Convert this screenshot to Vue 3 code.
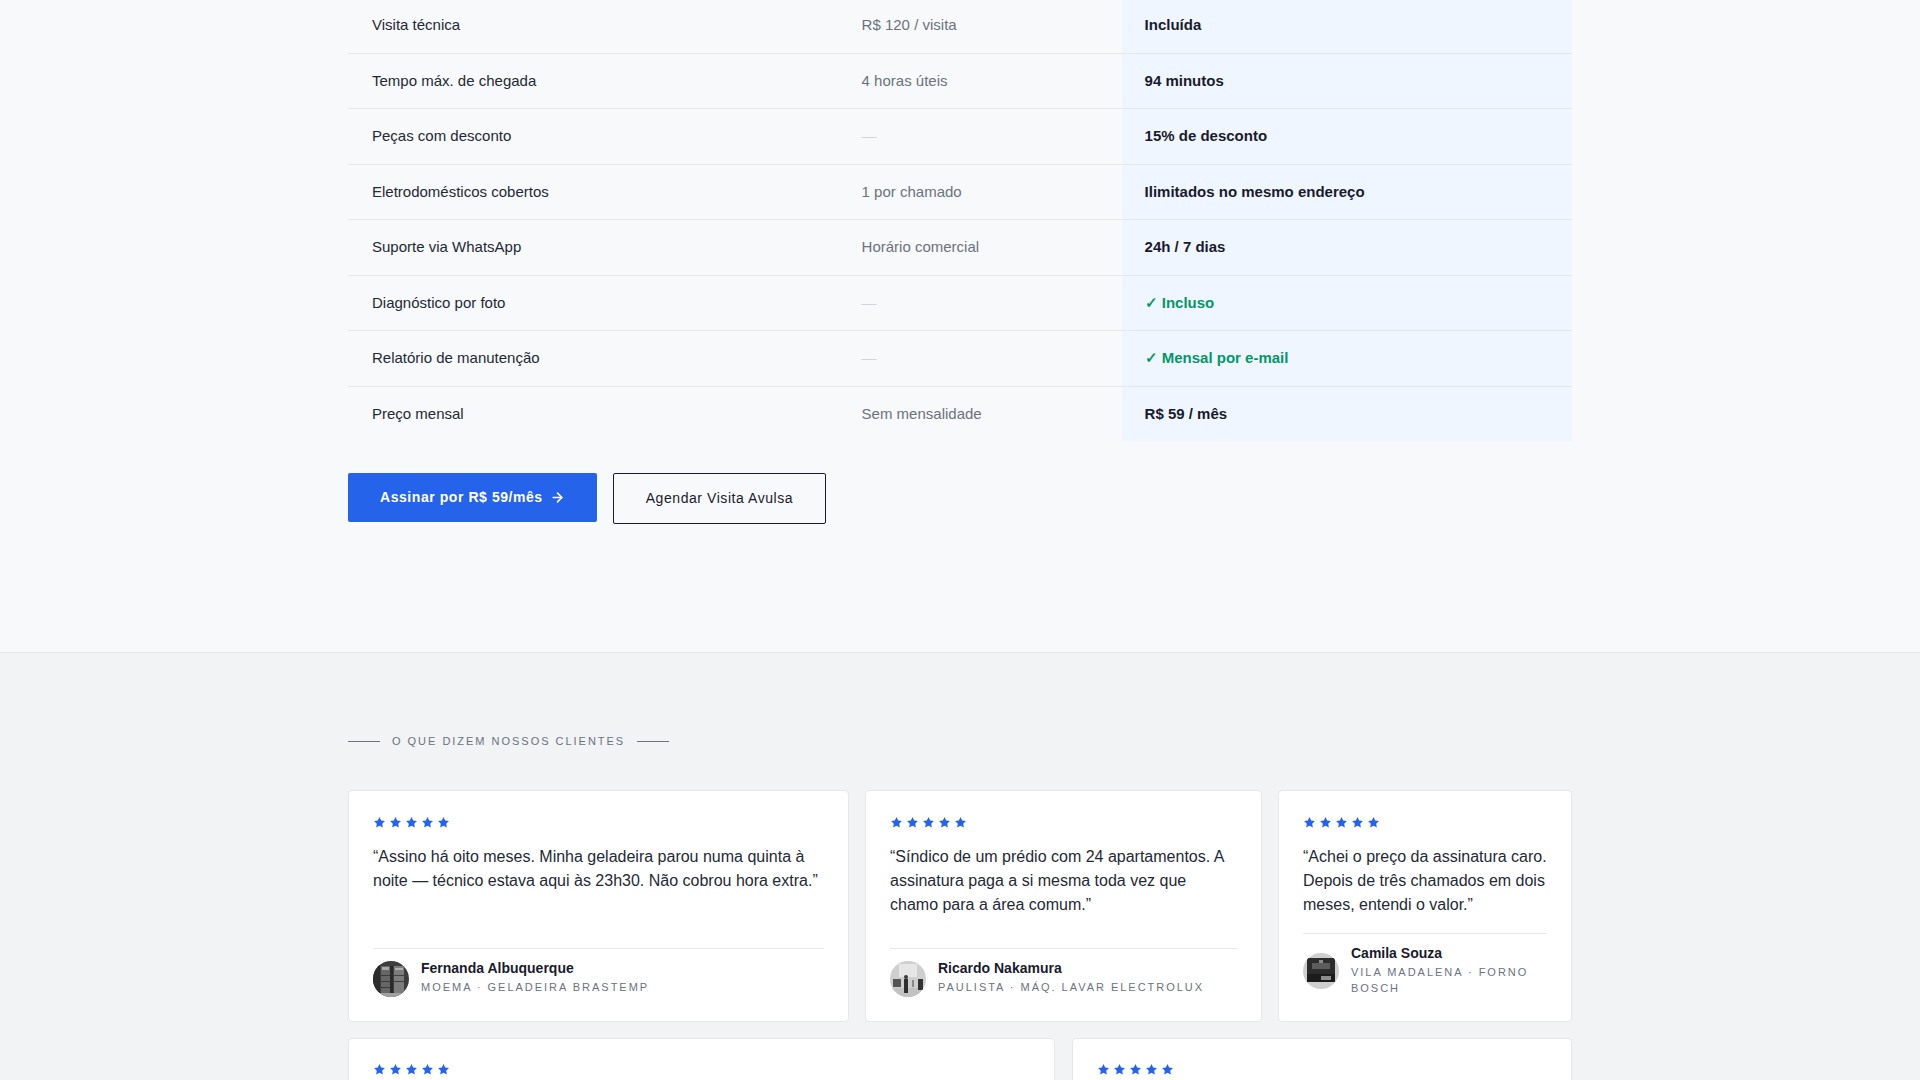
<script setup>
const rows = [
  { label: 'Visita técnica', avulso: 'R$ 120 / visita', plan: 'Incluída' },
  { label: 'Tempo máx. de chegada', avulso: '4 horas úteis', plan: '94 minutos' },
  { label: 'Peças com desconto', avulso: '—', none: true, plan: '15% de desconto' },
  { label: 'Eletrodomésticos cobertos', avulso: '1 por chamado', plan: 'Ilimitados no mesmo endereço' },
  { label: 'Suporte via WhatsApp', avulso: 'Horário comercial', plan: '24h / 7 dias' },
  { label: 'Diagnóstico por foto', avulso: '—', none: true, plan: '✓ Incluso', ok: true },
  { label: 'Relatório de manutenção', avulso: '—', none: true, plan: '✓ Mensal por e-mail', ok: true },
  { label: 'Preço mensal', avulso: 'Sem mensalidade', plan: 'R$ 59 / mês' }
]
const stars = [1, 2, 3, 4, 5]
const cardsTop = [
  { quote: '“Assino há oito meses. Minha geladeira parou numa quinta à noite — técnico estava aqui às 23h30. Não cobrou hora extra.”', name: 'Fernanda Albuquerque', meta: 'Moema · Geladeira Brastemp', kind: 'fridge' },
  { quote: '“Síndico de um prédio com 24 apartamentos. A assinatura paga a si mesma toda vez que chamo para a área comum.”', name: 'Ricardo Nakamura', meta: 'Paulista · Máq. Lavar Electrolux', kind: 'people' },
  { quote: '“Achei o preço da assinatura caro. Depois de três chamados em dois meses, entendi o valor.”', name: 'Camila Souza', meta: 'Vila Madalena · Forno Bosch', kind: 'oven' }
]
</script>

<template>
  <div class="page">
    <section class="compare">
      <div class="wrap">
        <table class="table">
          <colgroup>
            <col class="c1" /><col class="c2" /><col class="c3" />
          </colgroup>
          <tbody>
            <tr v-for="r in rows" :key="r.label">
              <td class="label">{{ r.label }}</td>
              <td class="avulso" :class="{ none: r.none }">{{ r.avulso }}</td>
              <td class="plan" :class="{ ok: r.ok }">{{ r.plan }}</td>
            </tr>
          </tbody>
        </table>
        <div class="actions">
          <button class="btn primary">
            Assinar por R$ 59/mês
            <svg width="15" height="15" viewBox="0 0 24 24" fill="none" stroke="currentColor" stroke-width="2.5" stroke-linecap="round" stroke-linejoin="round"><path d="M5 12h14" /><path d="m12 5 7 7-7 7" /></svg>
          </button>
          <button class="btn outline">Agendar Visita Avulsa</button>
        </div>
      </div>
    </section>

    <section class="reviews">
      <div class="wrap">
        <div class="eyebrow"><span class="rule"></span><span>O QUE DIZEM NOSSOS CLIENTES</span><span class="rule"></span></div>
        <div class="grid top">
          <article v-for="c in cardsTop" :key="c.name" class="card">
            <div class="stars">
              <svg v-for="s in stars" :key="s" width="13" height="13" viewBox="0 0 24 24" fill="#2563eb"><polygon points="12,2 15.09,8.26 22,9.27 17,14.14 18.18,21.02 12,17.77 5.82,21.02 7,14.14 2,9.27 8.91,8.26" /></svg>
            </div>
            <p class="quote">{{ c.quote }}</p>
            <div class="author">
              <svg class="avatar" viewBox="0 0 36 36">
                <defs><clipPath :id="'clip-' + c.kind"><circle cx="18" cy="18" r="18" /></clipPath></defs>
                <g v-if="c.kind === 'fridge'" :clip-path="'url(#clip-' + c.kind + ')'">
                  <rect width="36" height="36" fill="#3d3d3d" />
                  <rect x="0" y="0" width="7" height="36" fill="#2c2c2c" />
                  <rect x="8" y="5" width="9" height="27" fill="#666" />
                  <rect x="17" y="5" width="3" height="27" fill="#2a2a2a" />
                  <rect x="21" y="5" width="10" height="27" fill="#7c7c7c" />
                  <rect x="9" y="6" width="7" height="3" fill="#a8a8a8" />
                  <rect x="22" y="7" width="8" height="2" fill="#b0b0b0" />
                  <rect x="8" y="14" width="9" height="1" fill="#3a3a3a" />
                  <rect x="21" y="14" width="10" height="1" fill="#404040" />
                  <rect x="8" y="20" width="9" height="1" fill="#3a3a3a" />
                  <rect x="21" y="20" width="10" height="1" fill="#404040" />
                  <rect x="8" y="26" width="9" height="1" fill="#3a3a3a" />
                  <rect x="0" y="32" width="36" height="4" fill="#a0a0a0" />
                </g>
                <g v-else-if="c.kind === 'people'" :clip-path="'url(#clip-' + c.kind + ')'">
                  <rect width="36" height="36" fill="#cfcfcf" />
                  <rect x="9" y="3" width="18" height="13" fill="#e6e6e6" />
                  <rect y="27" width="36" height="9" fill="#c2c2c2" />
                  <rect x="3" y="18" width="8" height="8" fill="#555" />
                  <rect x="14" y="18" width="4" height="14" fill="#2f2f2f" />
                  <circle cx="16" cy="16" r="2" fill="#3a3a3a" />
                  <rect x="28" y="18" width="5" height="11" fill="#333" />
                  <rect x="22" y="19" width="2" height="7" fill="#8a8a8a" />
                </g>
                <g v-else :clip-path="'url(#clip-' + c.kind + ')'">
                  <rect width="36" height="36" fill="#cfcfcf" />
                  <rect x="4" y="5" width="28" height="24" rx="1" fill="#2c2c2c" />
                  <rect x="9" y="10" width="18" height="6" fill="#5c5c5c" />
                  <rect x="16" y="7" width="4" height="3" fill="#8a8a8a" />
                  <rect x="4" y="21" width="28" height="8" fill="#1c1c1c" />
                  <rect x="18" y="23" width="10" height="4" fill="#8d8d8d" />
                </g>
              </svg>
              <div class="who">
                <div class="name">{{ c.name }}</div>
                <div class="meta">{{ c.meta }}</div>
              </div>
            </div>
          </article>
        </div>
        <div class="grid bottom">
          <article class="card tall">
            <div class="stars">
              <svg v-for="s in stars" :key="s" width="13" height="13" viewBox="0 0 24 24" fill="#2563eb"><polygon points="12,2 15.09,8.26 22,9.27 17,14.14 18.18,21.02 12,17.77 5.82,21.02 7,14.14 2,9.27 8.91,8.26" /></svg>
            </div>
          </article>
          <article class="card tall">
            <div class="stars">
              <svg v-for="s in stars" :key="s" width="13" height="13" viewBox="0 0 24 24" fill="#2563eb"><polygon points="12,2 15.09,8.26 22,9.27 17,14.14 18.18,21.02 12,17.77 5.82,21.02 7,14.14 2,9.27 8.91,8.26" /></svg>
            </div>
          </article>
        </div>
      </div>
    </section>
  </div>
</template>

<style scoped>
.page {
  height: 1080px;
  overflow: hidden;
  font-family: "Liberation Sans", Arial, sans-serif;
  background: #f8f9fb;
  color: #1a1a2e;
}
.wrap {
  width: 1224px;
  margin: 0 auto;
}
.compare {
  padding-bottom: 128px;
  margin-top: -2px;
}
.table {
  width: 100%;
  border-collapse: separate;
  border-spacing: 0;
  table-layout: fixed;
  font-size: 15px;
}
.c1 { width: 40%; }
.c2 { width: 23.2%; }
.c3 { width: 36.8%; }
td {
  padding: 15px 24px;
  line-height: 24.5px;
  border-bottom: 1px solid #e5e7eb;
}
tr:last-child td { border-bottom: 0; }
.label { color: #1f2937; }
.avulso { color: #6b7280; }
.avulso.none { color: #d1d5db; }
.plan {
  padding-left: 23px;
  background: #eff6ff;
  font-weight: 700;
  color: #1a1a2e;
}
.plan.ok { color: #059669; }
.actions {
  display: flex;
  align-items: flex-start;
  gap: 16px;
  margin-top: 32px;
}
.btn {
  font-family: inherit;
  font-size: 14px;
  line-height: 17px;
  letter-spacing: 0.04em;
  padding: 16px 32px;
  border-radius: 2px;
  cursor: pointer;
}
.primary {
  display: flex;
  align-items: center;
  gap: 7.5px;
  padding-right: 31.5px;
  border: 0;
  background: #2563eb;
  color: #fff;
  font-weight: 700;
}
.outline {
  background: transparent;
  border: 1px solid #1a1a2e;
  color: #1a1a2e;
}
.reviews {
  background: #f1f3f5;
  border-top: 1px solid #e5e7eb;
  padding-top: 80px;
}
.eyebrow {
  display: flex;
  align-items: center;
  gap: 12px;
  font-size: 11px;
  line-height: 16px;
  letter-spacing: 0.18em;
  color: #6b7280;
}
.rule {
  width: 32px;
  height: 1px;
  background: #6b7280;
}
.grid {
  display: grid;
}
.top {
  margin-top: 41px;
  grid-template-columns: 501fr 397fr 294fr;
  gap: 16px;
}
.bottom {
  margin-top: 16px;
  grid-template-columns: 706.5fr 500.5fr;
  gap: 17px;
}
.card {
  display: flex;
  flex-direction: column;
  background: #fff;
  border: 1px solid #e5e7eb;
  border-radius: 4px;
  padding: 24px;
}
.tall { height: 240px; }
.stars {
  display: flex;
  gap: 3px;
  height: 13px;
  margin: 0.5px 0 16.5px;
}
.quote {
  margin: 0 0 15.5px;
  font-size: 16px;
  line-height: 24px;
  color: #1f2937;
}
.author {
  margin-top: auto;
  display: flex;
  align-items: center;
  gap: 12px;
  border-top: 1px solid #e5e7eb;
  padding-top: 12px;
}
.avatar {
  width: 36px;
  height: 36px;
  flex: none;
  filter: blur(0.4px);
}
.who {
  margin: -1px 0 1px;
}
.name {
  font-size: 14px;
  line-height: 17px;
  font-weight: 700;
  color: #1a1a2e;
  margin-bottom: 2px;
}
.meta {
  font-size: 11px;
  line-height: 16px;
  letter-spacing: 0.18em;
  text-transform: uppercase;
  color: #6b7280;
}
</style>

<style>
html, body { margin: 0; overflow: hidden; }
</style>
